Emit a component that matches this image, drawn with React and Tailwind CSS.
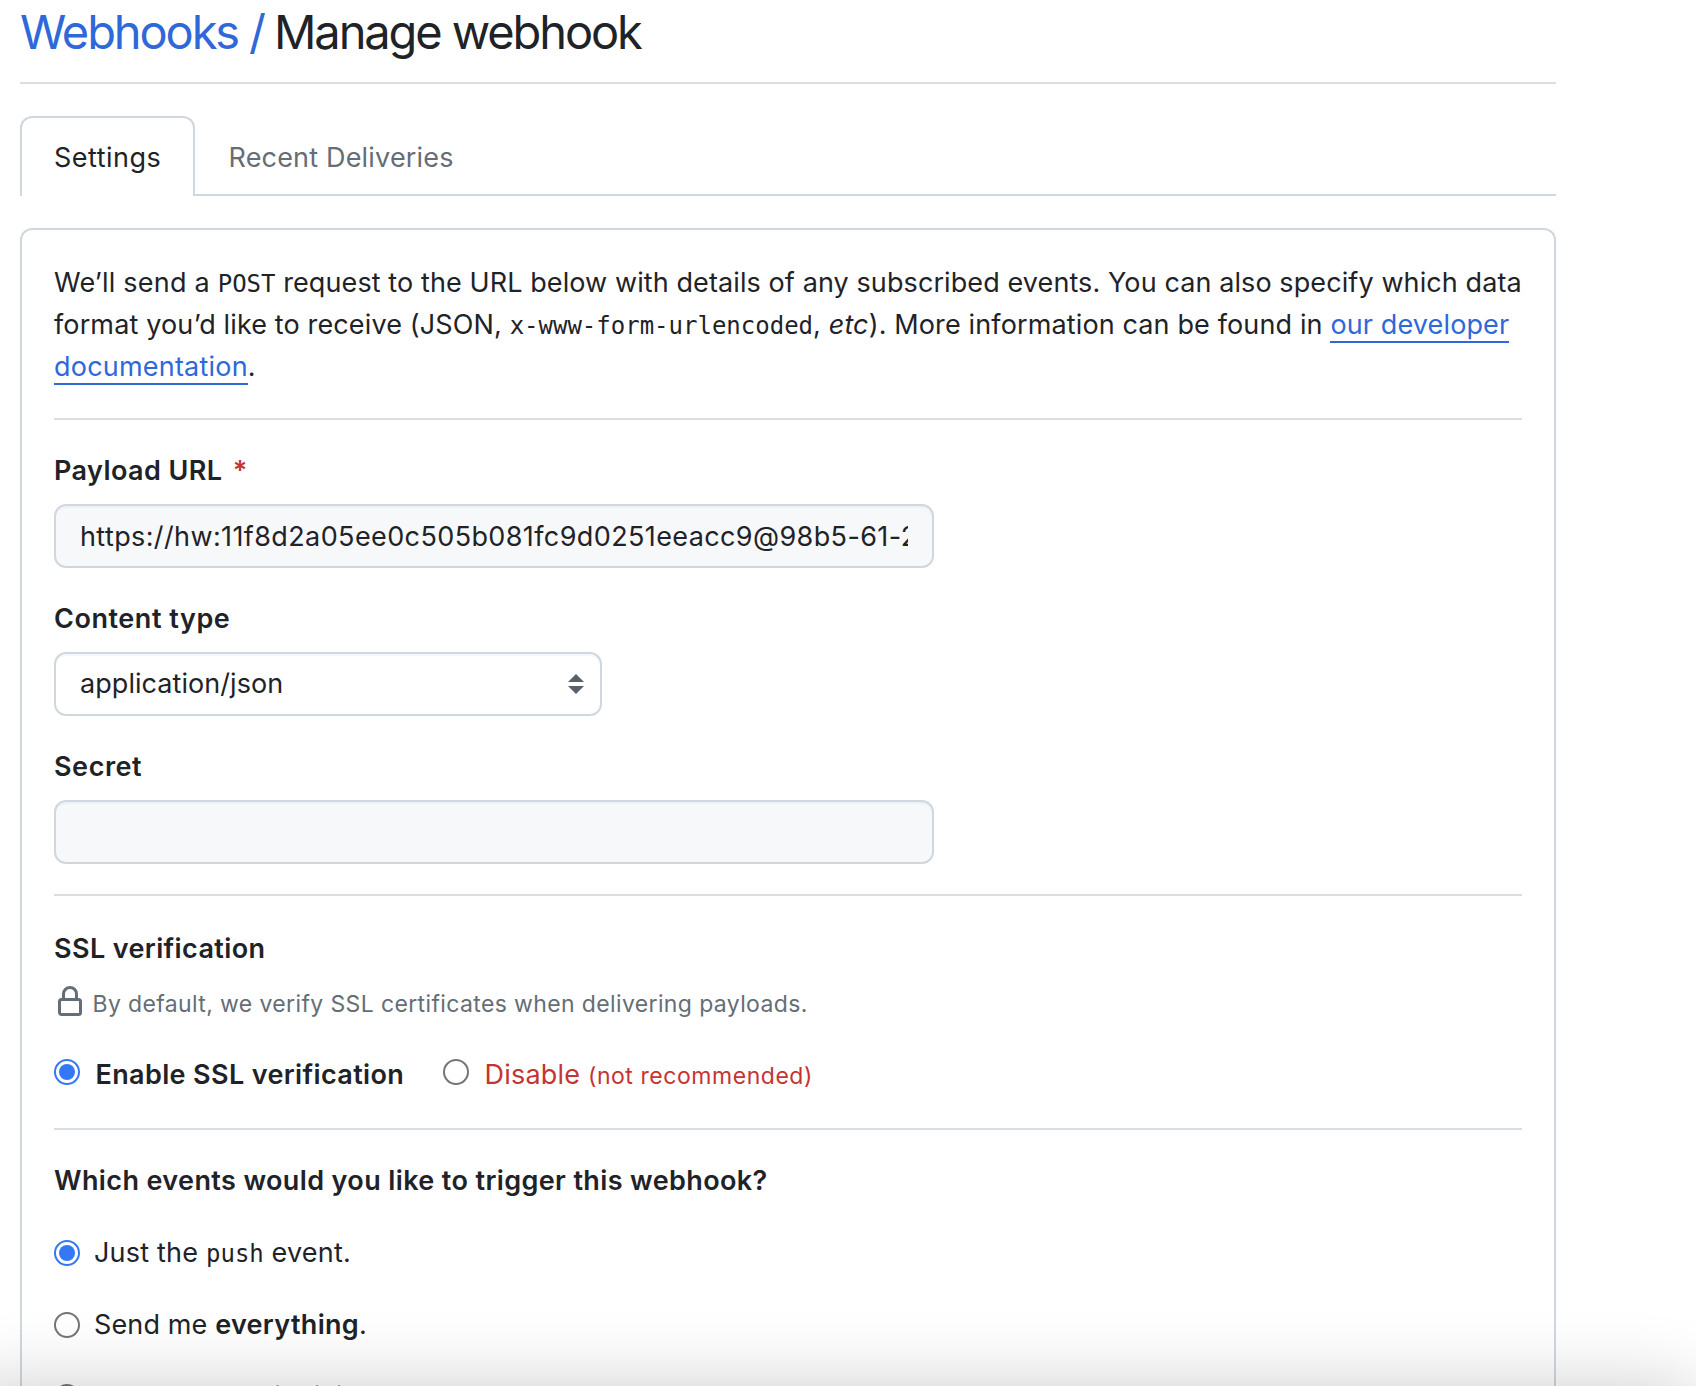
import React from "react";

function Divider({ className = "" }) {
  return <div className={`h-[2px] bg-[#d8dee4] ${className}`} />;
}

function Label({ children, className = "tracking-[0.37px]" }) {
  return (
    <div className={`h-[42px] whitespace-nowrap font-semibold leading-[42px] ${className}`}>
      {children}
    </div>
  );
}

function Radio({ checked = false, className = "" }) {
  return (
    <span
      className={`flex size-[26px] shrink-0 items-center justify-center rounded-full border-2 bg-white ${
        checked ? "border-[#3478f6]" : "border-[#757575]"
      } ${className}`}
    >
      {checked && <span className="size-4 rounded-full bg-[#3478f6]" />}
    </span>
  );
}

function Code({ children }) {
  return <code className="font-['DejaVu_Sans_Mono',monospace] text-[24px] leading-none tracking-normal">{children}</code>;
}

function LockIcon() {
  return (
    <svg viewBox="0 0 16 16" className="size-8 shrink-0 fill-current" aria-hidden="true">
      <path
        fillRule="evenodd"
        d="M4 4v2h-.25A1.75 1.75 0 0 0 2 7.75v5.5c0 .966.784 1.75 1.75 1.75h8.5A1.75 1.75 0 0 0 14 13.25v-5.5A1.75 1.75 0 0 0 12.25 6H12V4a4 4 0 1 0-8 0Zm6.5 2V4a2.5 2.5 0 1 0-5 0v2h5ZM12 7.5h.25a.25.25 0 0 1 .25.25v5.5a.25.25 0 0 1-.25.25h-8.5a.25.25 0 0 1-.25-.25v-5.5a.25.25 0 0 1 .25-.25H12Z"
      />
    </svg>
  );
}

const inputClass =
  "block h-16 w-[880px] rounded-xl border-2 border-[#d0d7de] bg-[#f6f8fa] px-6 tracking-[0.39px] shadow-[inset_0_2px_0_rgba(208,215,222,0.2)] outline-none";
const linkClass = "border-b-2 border-[#2f68d8] text-[#2f68d8]";

export default function App() {
  return (
    <div className="relative h-[1386px] w-[1696px] overflow-hidden bg-white font-['Inter','Liberation_Sans',sans-serif] text-[27px] leading-[42px] tracking-[0.13px] text-[#1f2328]">
      <div className="ml-5 w-[1536px]">
        <h1 className="flex h-[82px] whitespace-nowrap pt-[2px] text-[47px] leading-[60px] tracking-[-2.1px]">
          <a className="w-[229px] text-[#2f68d8]">Webhooks</a>
          <span className="w-[25px] text-[#2f68d8]">/</span>
          <span>Manage webhook</span>
        </h1>
        <Divider />

        <nav className="mt-8 flex h-20 items-stretch whitespace-nowrap">
          <div className="w-[175px] rounded-t-xl border-2 border-b-0 border-[#d0d7de] pl-8 pt-[19px] tracking-[0.5px]">
            Settings
          </div>
          <div className="flex-1 border-b-2 border-[#d0d7de] pl-[33.5px] pt-[21px] tracking-[0.18px] text-[#656d76]">
            Recent Deliveries
          </div>
        </nav>

        <section className="mt-8 h-[1300px] rounded-xl border-2 border-[#d0d7de] px-8 pt-8">
          <p className="whitespace-nowrap">
            <span className="tracking-[0.22px]">We’ll send a </span>
            <Code>POST</Code>
            <span className="tracking-[0.095px]">
              {" "}
              request to the URL below with details of any subscribed events. You can also specify which data
            </span>
            <br />
            format you’d like to receive (JSON, <Code>x-www-form-urlencoded</Code>, <em>etc</em>). More information can
            be found in <a className={linkClass}>our developer</a>
            <br />
            <a className={`${linkClass} tracking-[0.21px]`}>documentation</a>.
          </p>
          <Divider className="mt-[30px]" />

          <Label className="mt-[30px] tracking-[0.42px]">
            Payload URL <span className="ml-[3px] text-[#c53434]">*</span>
          </Label>
          <input
            className={`${inputClass} mt-3`}
            readOnly
            value="https://hw:11f8d2a05ee0c505b081fc9d0251eeacc9@98b5-61-216"
          />

          <Label className="mt-[30px] tracking-[0.55px]">Content type</Label>
          <div className="mt-3 flex h-16 w-[548px] items-center justify-between rounded-xl border-2 border-[#d0d7de] pl-6 pr-4 shadow-[inset_0_2px_0_rgba(208,215,222,0.2)]">
            <span className="tracking-[0.06px]">application/json</span>
            <svg viewBox="0 0 16 20" className="h-5 w-4 fill-[#586069]" aria-hidden="true">
              <path d="M8 0 16 8H0ZM0 12h16L8 20Z" />
            </svg>
          </div>

          <Label className="mt-[30px] tracking-[0.55px]">Secret</Label>
          <input className={`${inputClass} mt-3`} readOnly value="" />
          <Divider className="mt-[30px]" />

          <Label className="mt-8 tracking-[0.38px]">SSL verification</Label>
          <div className="mt-4 flex h-9 whitespace-nowrap text-[23px] leading-9 tracking-[0.37px] text-[#656d76]">
            <LockIcon />
            <span className="ml-[6.5px]">By default, we verify SSL certificates when delivering payloads.</span>
          </div>
          <div className="mt-8 flex h-[42px] whitespace-nowrap">
            <Radio checked className="mt-[5px]" />
            <span className="ml-[15.5px] w-[347.5px] font-semibold tracking-[0.36px]">Enable SSL verification</span>
            <Radio className="mt-[5px]" />
            <span className="ml-[15.5px] tracking-[0.2px] text-[#c53434]">
              Disable <span className="text-[23px] tracking-[0.55px]">(not recommended)</span>
            </span>
          </div>
          <Divider className="mt-8" />

          <Label className="mt-[30px] tracking-[0.38px]">Which events would you like to trigger this webhook?</Label>
          <div className="mt-[30px] flex flex-col gap-[30px] whitespace-nowrap">
            <div className="flex h-[42px] gap-[14px]">
              <Radio checked className="mt-2" />
              <span className="tracking-[0.2px]">
                Just the <Code>push</Code> event.
              </span>
            </div>
            <div className="flex h-[42px] gap-[14px]">
              <Radio className="mt-2" />
              <span>
                Send me <b className="font-semibold tracking-[0.3px]">everything</b>.
              </span>
            </div>
            <div className="flex h-[42px] gap-[14px]">
              <Radio className="mt-2" />
              <span>Let me select individual events.</span>
            </div>
          </div>
        </section>
      </div>

      <div className="pointer-events-none absolute -left-10 top-[1386px] h-[200px] w-[1736px] shadow-[0_0_76px_rgba(0,0,0,0.2)]" />
    </div>
  );
}
